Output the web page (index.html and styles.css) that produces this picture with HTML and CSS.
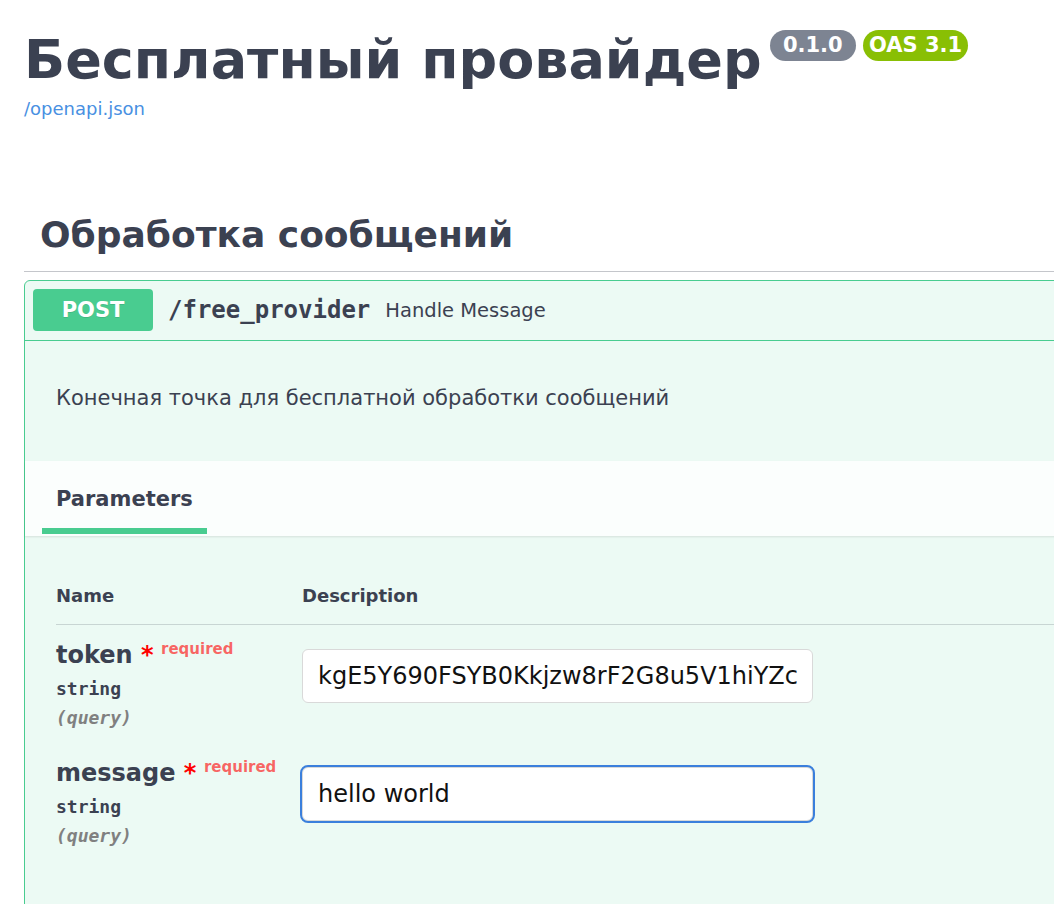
FILE: index.html
```html
<!DOCTYPE html>
<html lang="ru">
<head>
<meta charset="utf-8">
<title>Бесплатный провайдер</title>
<link rel="stylesheet" href="styles.css">
</head>
<body>
<div class="page">
  <div class="info">
    <div class="title-row">
      <h1 class="title">Бесплатный провайдер</h1>
      <div class="badges">
        <span class="badge badge-version"> 0.1.0 </span>
        <span class="badge badge-oas">OAS 3.1</span>
      </div>
    </div>
    <a class="spec-link" href="#">/openapi.json</a>
  </div>

  <div class="tag">
    <h3 class="tag-title">Обработка сообщений</h3>
    <div class="opblock">
      <div class="summary">
        <span class="method">POST</span>
        <span class="path">/free_provider</span>
        <span class="summary-desc">Handle Message</span>
      </div>
      <div class="desc">
        <p>Конечная точка для бесплатной обработки сообщений</p>
      </div>
      <div class="section-header">
        <div class="tab"><h4>Parameters</h4></div>
      </div>
      <div class="params">
        <div class="param-head">
          <div class="head-cell">Name</div>
          <div class="head-cell">Description</div>
        </div>
        <div class="param-row">
          <div class="param-name-col">
            <div class="param-name">token<span class="star">&nbsp;*</span><span class="req">required</span></div>
            <div class="param-type">string</div>
            <div class="param-in">(query)</div>
          </div>
          <div class="param-desc-col">
            <input class="field" type="text" value="kgE5Y690FSYB0Kkjzw8rF2G8u5V1hiYZc">
          </div>
        </div>
        <div class="param-row">
          <div class="param-name-col">
            <div class="param-name">message<span class="star">&nbsp;*</span><span class="req">required</span></div>
            <div class="param-type">string</div>
            <div class="param-in">(query)</div>
          </div>
          <div class="param-desc-col">
            <input class="field field-focus" type="text" value="hello world">
          </div>
        </div>
      </div>
    </div>
  </div>
</div>
</body>
</html>
```
FILE: styles.css
```css
html, body {
  margin: 0;
  padding: 0;
  overflow: hidden;
  background: #fff;
}

body {
  font-family: "DejaVu Sans", sans-serif;
  color: #3b4151;
}

.page {
  width: 1200px;
  padding-left: 24px;
  box-sizing: border-box;
}

/* ---------- info ---------- */
.info {
  padding-top: 28px;
}

.title-row {
  display: flex;
  align-items: flex-start;
}

.title {
  margin: 0;
  font-size: 54px;
  line-height: 64px;
  font-weight: 700;
  color: #3b4151;
}

.badges {
  display: flex;
  gap: 7px;
  margin: 2px 0 0 8px;
}

.badge {
  font-size: 21px;
  font-weight: 700;
  line-height: 25px;
  padding: 3px 6px;
  border-radius: 86px;
  color: #fff;
  white-space: pre;
}

.badge-version {
  background: #7d8492;
}

.badge-oas {
  background: #89bf04;
}

.spec-link {
  display: inline-block;
  margin-top: 5px;
  font-size: 18px;
  line-height: 24px;
  color: #4990e2;
  text-decoration: none;
}

/* ---------- tag ---------- */
.tag {
  margin-top: 92px;
}

.tag-title {
  margin: 0;
  padding: 0 0 14px 16px;
  font-size: 36px;
  line-height: 44px;
  font-weight: 700;
  border-bottom: 1px solid #c4c6cb;
}

/* ---------- opblock ---------- */
.opblock {
  margin-top: 8px;
  border: 1px solid #49cc90;
  border-radius: 6px;
  background: rgba(73, 204, 144, 0.1);
  padding-bottom: 200px;
}

.summary {
  display: flex;
  align-items: center;
  padding: 8px 8px 9px;
  border-bottom: 1px solid #49cc90;
}

.method {
  width: 120px;
  height: 42px;
  border-radius: 4px;
  background: #49cc90;
  color: #fff;
  font-size: 21px;
  font-weight: 700;
  display: flex;
  align-items: center;
  justify-content: center;
  text-shadow: 0 1px 0 rgba(0, 0, 0, 0.1);
}

.path {
  font-family: "DejaVu Sans Mono", monospace;
  font-size: 24px;
  font-weight: 700;
  padding: 0 15px;
  color: #3b4151;
}

.summary-desc {
  font-size: 19.5px;
  color: #3b4151;
}

.desc {
  padding: 42px 31px 48px;
}

.desc p {
  margin: 0;
  font-size: 21px;
  line-height: 30px;
}

.section-header {
  display: flex;
  padding: 0 17px 2px;
  background: rgba(255, 255, 255, 0.8);
  box-shadow: 0 1px 2px rgba(0, 0, 0, 0.1);
}

.tab {
  padding: 23px 14px 0;
  border-bottom: 6px solid #49cc90;
}

.tab h4 {
  margin: 0 0 14px;
  font-size: 21px;
  line-height: 30px;
  font-weight: 700;
}

/* ---------- parameters ---------- */
.params {
  padding: 30px 0 0 31px;
}

.param-head {
  display: grid;
  grid-template-columns: 246px 1fr;
  border-bottom: 1px solid rgba(59, 65, 81, 0.2);
}

.head-cell {
  padding: 18px 0 16px;
  font-size: 18px;
  line-height: 24px;
  font-weight: 700;
}

.param-row {
  display: grid;
  grid-template-columns: 246px 1fr;
  padding: 15px 0 12px;
}

.param-name {
  font-size: 24px;
  line-height: 30px;
  font-weight: 700;
  white-space: nowrap;
}

.star {
  color: red;
}

.req {
  font-size: 15px;
  line-height: 1;
  color: rgba(255, 0, 0, 0.6);
  padding: 0 7.5px;
  vertical-align: 9px;
}

.param-type {
  font-family: "DejaVu Sans Mono", monospace;
  font-size: 18px;
  font-weight: 600;
  line-height: 27px;
  padding-top: 5px;
}

.param-in {
  font-family: "DejaVu Sans Mono", monospace;
  font-size: 18px;
  font-style: italic;
  font-weight: 600;
  line-height: 27px;
  padding-top: 2px;
  color: #808080;
}

.field {
  display: block;
  margin-top: 9px;
  width: 511px;
  height: 54px;
  box-sizing: border-box;
  border: 1px solid #d9d9d9;
  border-radius: 6px;
  padding: 12px 15px;
  background: #fff;
  font-family: "DejaVu Sans", sans-serif;
  font-size: 24px;
  color: #111;
}

.field-focus {
  outline: 2px solid #3b7fdc;
  outline-offset: 0;
}
```
